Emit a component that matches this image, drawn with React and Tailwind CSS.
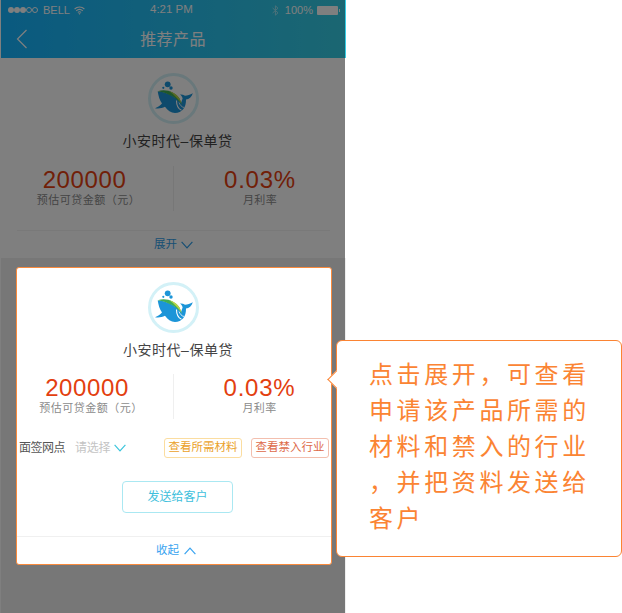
const CJK = { fontFamily: '"Liberation Sans","Noto Sans CJK SC",sans-serif' };

function Logo() {
  return (
    <svg width="52" height="52" viewBox="0 0 52 52" className="block">
      <circle cx="25.5" cy="25.5" r="24" fill="#fff" stroke="#d3f1f7" strokeWidth="3" />
      <circle cx="19.7" cy="11.3" r="2.9" fill="#1c95d8" />
      <circle cx="23" cy="15" r="1.7" fill="#1c95d8" />
      <circle cx="15.3" cy="14.8" r="1.1" fill="#1c95d8" />
      <path d="M9.7 18.5C10.5 23 11.5 27 14 30.5C12 32.5 10 34 7 35.2C10.5 35.8 14 35.3 17 33.8C19.5 37.5 23 39.8 27 39.9C34 39.9 38.3 34.5 38 26.5C41 26.2 43.8 24 44.8 20.3C42 21.5 39.5 22.8 37 22.8C35.5 21.8 33.8 21.3 32 21.5C33.3 22.5 34.3 23.8 34.6 25.5L33 30C28 23.5 19 19 9.7 18.5Z" fill="#1c95d8" />
      <path d="M9.7 18.3C18 15.5 27 19 31.5 25.5L34 31.5C29 25 20 20 9.7 18.3Z" fill="#3fae55" />
      <path d="M21 18C26 19.5 30 22.5 31.5 25.5L34 31.5C31 26.5 26.5 22 21 18Z" fill="#bcd445" />
      <path d="M28.5 27.5C28.5 32 30 35.8 33.5 37.3" fill="none" stroke="#fff" strokeWidth="1.1" />
      <path d="M31 29.5C32 32 33.5 34 36 34.5" fill="none" stroke="#fff" strokeWidth="0.8" />
    </svg>
  );
}

function Chevron({ up, color, className }) {
  return (
    <svg width="12" height="8" viewBox="0 0 12 8" className={className}>
      <path d={up ? "M.6 7.2L6 1.2L11.4 7.2" : "M.6 .8L6 6.8L11.4 .8"} fill="none" stroke={color} strokeWidth="1.2" />
    </svg>
  );
}

function Head({ top, statsGap, leftClass, rightClass }) {
  return (
    <>
      <div className={`flex justify-center ${top}`}>
        <div className="w-[52px] h-[52px]"><Logo /></div>
      </div>
      <div className="text-center text-[14px] leading-[20px] mt-[6px] tracking-[0.5px] text-[#444]">
        <span className="inline-block translate-x-[4px]">小安时代–保单贷</span>
      </div>
      <div className={`flex ${statsGap} h-[45px]`}>
        <div className={`${leftClass} border-r border-[#efefef] text-center`}>
          <div className="text-[24px] leading-[28px] tracking-[0.6px] text-[#e3400f]">200000</div>
          <div className="text-[11px] leading-[15px] -mt-[1px] pl-[8px] text-[#8b8b8b] tracking-[0.5px] whitespace-nowrap">预估可贷金额（元）</div>
        </div>
        <div className={`${rightClass} text-center`}>
          <div className="text-[24px] leading-[28px] tracking-[0.75px] text-[#e3400f]">0.03%</div>
          <div className="text-[11px] leading-[15px] -mt-[1px] text-[#8b8b8b] tracking-[0.4px]">月利率</div>
        </div>
      </div>
    </>
  );
}

function StatusBar() {
  return (
    <div className="relative h-5 flex items-center justify-between pl-[7px] pr-[6px] text-[11px] text-white">
      <div className="flex items-center">
        {[0, 1, 2].map((i) => <span key={i} className="w-[6px] h-[6px] rounded-full bg-white" />)}
        {[0, 1].map((i) => <span key={i} className="w-[6px] h-[6px] rounded-full border border-white" />)}
        <span className="ml-[5px]">BELL</span>
        <svg width="11" height="9" viewBox="0 0 11 9" className="ml-[4px]">
          <path d="M.6 3C3.4.4 7.6.4 10.4 3M2.2 4.8C4.1 3.1 6.9 3.1 8.8 4.8M3.8 6.4C4.8 5.6 6.2 5.6 7.2 6.4" fill="none" stroke="#fff" strokeWidth="1.1" />
          <path d="M5.5 8.8L4.4 7.5C5 7 6 7 6.6 7.5Z" fill="#fff" />
        </svg>
      </div>
      <div className="absolute left-[149px] text-[11.5px]">4:21 PM</div>
      <div className="flex items-center">
        <svg width="7" height="11" viewBox="0 0 7 11" className="mr-[6px] opacity-50">
          <path d="M.6 3L6 7.8L3.4 10.2V.8L6 3.2L.6 8" fill="none" stroke="#fff" strokeWidth="1" />
        </svg>
        <span>100%</span>
        <div className="ml-[4px] w-[21px] h-[9px] bg-white rounded-[1px]" />
        <div className="ml-[0.5px] w-[1.5px] h-[3px] bg-white" />
      </div>
    </div>
  );
}

function Row() {
  return (
    <div className="flex items-center h-[20px] mt-[19px] pl-[2px] text-[12px]">
      <span className="text-[#555] tracking-[-0.5px] w-[46px] whitespace-nowrap">面签网点</span>
      <span className="ml-[10px] text-[#c4c4c4] tracking-[-0.3px] w-[35px] whitespace-nowrap">请选择</span>
      <Chevron color="#3cc5dc" className="ml-[4px]" />
      <div className="ml-[38px] w-[78px] h-[20px] flex items-center justify-center rounded-[3px] border border-[#fbdda0] text-[11.5px] text-[#eaa12a] whitespace-nowrap">查看所需材料</div>
      <div className="ml-[9px] w-[78px] h-[20px] flex items-center justify-center rounded-[3px] border border-[#f3bfae] text-[11.5px] text-[#dd6a48] whitespace-nowrap">查看禁入行业</div>
    </div>
  );
}

export default function App() {
  return (
    <div className="relative w-[622px] h-[613px] bg-white overflow-hidden" style={CJK}>
      <div className="relative w-[346px] h-[613px] bg-white">
        <div className="ml-[1px] h-[613px] bg-[#eeeeee]">
          <div className="bg-gradient-to-r from-[#14b4ff] to-[#36cde4]">
            <StatusBar />
            <div className="relative h-[38px] flex items-center justify-center pt-[2px] pr-[1px]">
              <svg width="12" height="20" viewBox="0 0 12 20" className="absolute left-[15px] top-[9px]">
                <path d="M10.5 1L1.5 10L10.5 19" fill="none" stroke="#fff" strokeWidth="1.2" />
              </svg>
              <span className="text-[16px] tracking-[0.4px] text-white">推荐产品</span>
            </div>
          </div>
          <div className="bg-white h-[200px]">
            <Head top="pt-[15px]" statsGap="mt-[15px]" leftClass="w-[173px] pr-[5px]" rightClass="w-[172px]" />
            <div className="mx-[16px] mt-[19px] border-t border-[#f2f2f2] h-[28px] flex items-center justify-center gap-[4px] text-[11.5px] text-[#2f9ee8]">
              <span>展开</span>
              <Chevron color="#2f9ee8" />
            </div>
          </div>
        </div>
        <div className="absolute left-0 top-0 w-[345px] h-[613px] bg-black/50" />
      </div>

      <div className="absolute left-[16px] top-[267px] w-[316px] h-[298px] bg-white rounded-[3px] border border-[#f98a3c] box-border">
        <Head top="pt-[14px]" statsGap="mt-[14px]" leftClass="w-[157px] pr-[16px]" rightClass="w-[157px] pl-[14px]" />
        <Row />
        <div className="flex justify-center mt-[23px]">
          <div className="w-[111px] h-[32px] ml-[7px] rounded-[4px] border border-[#aae8f2] flex items-center justify-center text-[12px] text-[#41bfdc]">发送给客户</div>
        </div>
        <div className="mt-[23px] border-t border-[#f0f0f0] h-[28px] flex items-center justify-center gap-[5px] pl-[4px] text-[11.5px] text-[#3aa4f0]">
          <span>收起</span>
          <Chevron up color="#3aa4f0" />
        </div>
      </div>

      <div className="absolute left-[336px] top-[340px] w-[286px] h-[217px] bg-white rounded-[6px] border border-[#fb8433] box-border pl-[32px] pt-[16px] text-[24px] leading-[36px] tracking-[3.6px] text-[#fb8433]">
        <div className="absolute left-[-7px] top-[32px] w-[13px] h-[13px] rotate-45 bg-white border-l border-b border-[#fb8433]" />
        <div className="relative whitespace-nowrap">点击展开，可查看</div>
        <div className="relative whitespace-nowrap">申请该产品所需的</div>
        <div className="relative whitespace-nowrap">材料和禁入的行业</div>
        <div className="relative whitespace-nowrap">，并把资料发送给</div>
        <div className="relative whitespace-nowrap">客户</div>
      </div>
    </div>
  );
}
